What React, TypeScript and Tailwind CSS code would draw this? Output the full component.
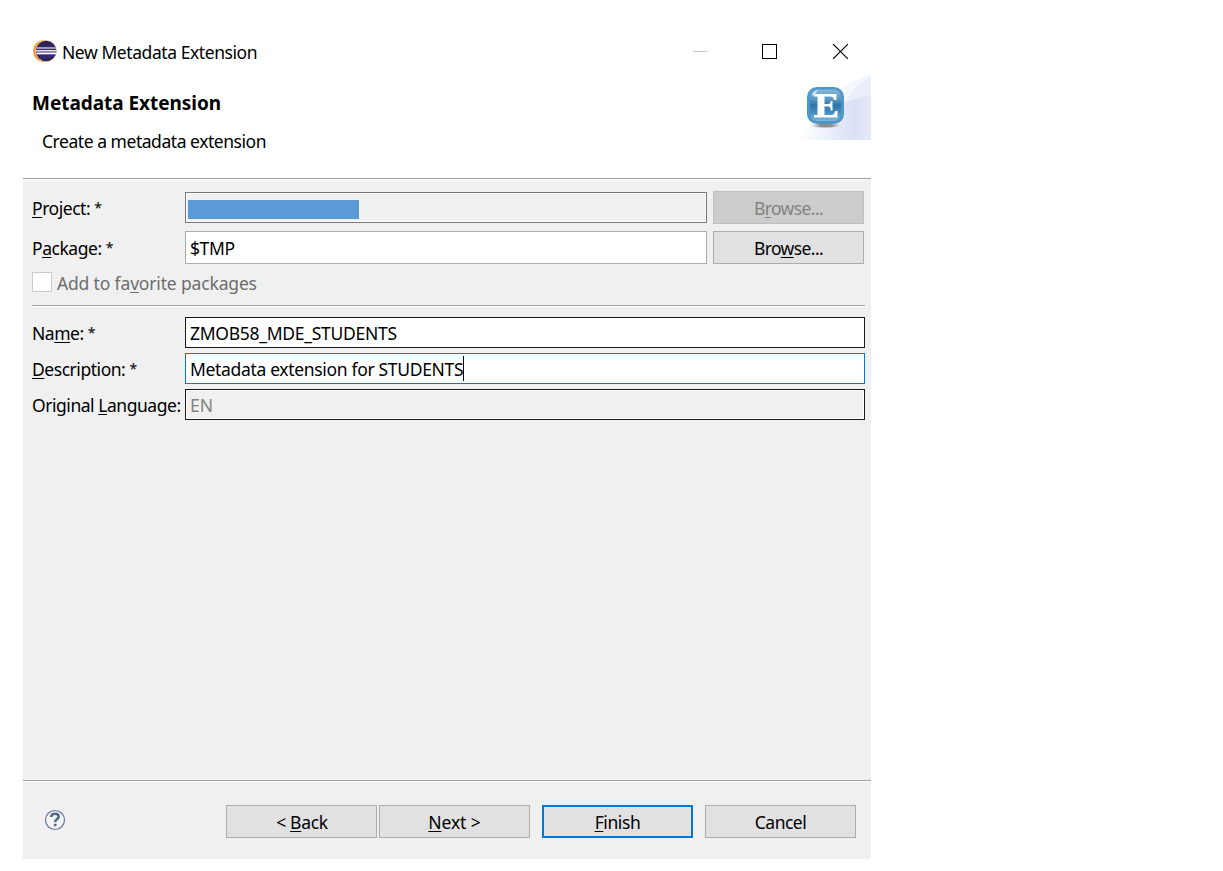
import type { ReactNode } from 'react'

// Underlined mnemonic letter
function Key({ children }: { children: ReactNode }) {
  return (
    <span className="underline decoration-1 underline-offset-[2px] [text-decoration-skip-ink:none]">
      {children}
    </span>
  )
}

// Required field marker
function Star() {
  return <span className="align-[2px] text-[14px] leading-none">*</span>
}

function Separator({ className = '' }: { className?: string }) {
  return <div className={`h-[2px] shrink-0 border-t border-[#a0a0a0] bg-white ${className}`} />
}

function Button({
  children,
  className = 'border border-[#adadad] bg-[#e1e1e1]',
}: {
  children: ReactNode
  className?: string
}) {
  return (
    <button className={`flex h-[33px] w-[151px] items-center justify-center ${className}`}>
      {children}
    </button>
  )
}

function EclipseLogo() {
  return (
    <svg width="25" height="24" viewBox="0 0 25 24">
      <defs>
        <linearGradient id="ball" x1="0" y1="0" x2="0" y2="1">
          <stop offset="0" stopColor="#2a2050" />
          <stop offset="0.6" stopColor="#3c2e72" />
          <stop offset="1" stopColor="#2a1f55" />
        </linearGradient>
      </defs>
      <circle cx="12" cy="11" r="10.8" fill="#f7941e" />
      <circle cx="14.1" cy="11" r="10.8" fill="#fbd9a8" />
      <circle cx="14.1" cy="11" r="10.3" fill="url(#ball)" />
      <rect x="4.4" y="7" width="19.6" height="2" fill="#9d96c0" />
      <rect x="4" y="10" width="20.4" height="1.500" fill="#e4e2ee" />
      <rect x="4.4" y="12.500" width="19.6" height="1.8" fill="#ffffff" />
    </svg>
  )
}

function HeaderArt() {
  return (
    <svg width="71" height="66" viewBox="0 0 71 66">
      <defs>
        <linearGradient id="swoosh" x1="0" y1="0" x2="1" y2="0">
          <stop offset="0" stopColor="#ffffff" />
          <stop offset="0.35" stopColor="#edf1fb" />
          <stop offset="0.75" stopColor="#d9e1f5" />
          <stop offset="1" stopColor="#e4e9f8" />
        </linearGradient>
        <linearGradient id="tile" x1="0" y1="0" x2="0" y2="1">
          <stop offset="0" stopColor="#86b4d7" />
          <stop offset="0.3" stopColor="#5c9ac8" />
          <stop offset="0.5" stopColor="#2e75aa" />
          <stop offset="0.75" stopColor="#4a90c2" />
          <stop offset="1" stopColor="#7db4da" />
        </linearGradient>
        <radialGradient id="shade">
          <stop offset="0.4" stopColor="#8d8d8d" />
          <stop offset="1" stopColor="#ffffff" stopOpacity="0" />
        </radialGradient>
      </defs>
      <path d="M32 21C44 12 56 5 71 0V40H30Z" fill="#f3f6fd" />
      <path d="M41 37C47 23 56 10 71 2V66H41Z" fill="#e9eefa" />
      <path d="M1 66C8 48 22 33 44 29C52 26 61 23 71 22V66Z" fill="url(#swoosh)" />
      <ellipse cx="26" cy="51.500" rx="18" ry="3.500" fill="url(#shade)" />
      <rect x="7" y="13" width="37" height="37" rx="10" fill="#4d96c9" />
      <rect x="10" y="15.5" width="31" height="31.5" rx="7" fill="url(#tile)" />
      <path d="M12 22c0-3 2-5 6-6l-3 4z" fill="#ffffff" opacity="0.7" />
      <path
        d="M14 20H36.500V26H34C33.500 23.500 32.500 22.500 30 22.500H24.500V30H28.500C30 30 30.500 29 30.800 27H32.500V36.500H30.800C30.500 34 30 32.500 28.500 32.500H24.500V41H31C34 41 34.500 40 35 37H37.500V43.500H14V41H17.500V22.500H14Z"
        fill="#ffffff"
      />
    </svg>
  )
}

function HelpIcon() {
  return (
    <svg width="22" height="22" viewBox="0 0 22 22" fill="none">
      <circle cx="11" cy="11" r="9.5" fill="#f4f4f4" stroke="#6a7c98" strokeWidth="1.2" />
      <path
        d="M7.200 8C7.200 5.700 8.800 4.800 11 4.800C13.300 4.800 14.700 5.800 14.700 7.700C14.700 10 11.200 10.200 11.200 13.200"
        stroke="#526a8f"
        strokeWidth="2.600"
      />
      <rect x="9.900" y="14.800" width="2.700" height="2.500" rx="0.700" fill="#526a8f" />
    </svg>
  )
}

const label = 'w-[153px] shrink-0 whitespace-nowrap tracking-[-0.46px]'
const field = 'flex items-center pl-1 whitespace-nowrap'

export default function App() {
  return (
    <div className="h-[871px] w-[1223px] overflow-hidden bg-white pl-[23px] pt-[30px] font-['Noto_Sans','Open_Sans',sans-serif] text-[17.5px] leading-6 text-black">
      <div className="flex h-[829px] w-[848px] flex-col bg-[#f0f0f0]">
        {/* Title bar and page heading */}
        <header className="flex h-[148px] shrink-0 justify-between bg-white">
          <div>
            <div className="flex h-[43px] items-center pl-[9px]">
              <EclipseLogo />
              <span className="pl-[5px] tracking-[-0.43px]">New Metadata Extension</span>
            </div>
            <h1 className="pl-[9px] pt-[18px] text-[19px] font-bold tracking-[-0.04px]">Metadata Extension</h1>
            <p className="pl-[19px] pt-[14px] tracking-[-0.46px]">Create a metadata extension</p>
          </div>
          <div className="flex flex-col items-end">
            <div className="flex h-[43px] items-center gap-[55px] pr-[23px]">
              <div className="flex items-center gap-[54px]">
                <div className="h-px w-[15px] bg-[#c9c9c9]" />
                <div className="h-[15px] w-[15px] border border-black" />
              </div>
              <svg width="16" height="15" viewBox="0 0 16 15" stroke="#000" strokeWidth="1.100">
                <path d="M1 0L16 15M16 0L1 15" />
              </svg>
            </div>
            <div className="pt-[1px]">
              <HeaderArt />
            </div>
          </div>
        </header>
        <Separator />

        <main className="flex flex-1 flex-col pl-[9px] pt-[11px]">
          <div className="flex h-[33px] items-center">
            <label className={label}><Key>P</Key>roject: <Star /></label>
            <div className="h-[31px] w-[522px] border border-[#7a7a7a] bg-[#f0f0f0] pl-[1px] pt-[7px] shadow-[inset_0_0_0_1px_#fff]">
              <div className="ml-[1px] h-[19px] w-[171px] bg-[#5b9bd5]" />
            </div>
            <div className="pl-[6px]">
              <Button className="border border-[#bfbfbf] bg-[#cccccc] text-[#838383]">
                <span className="tracking-[-0.6px]">B<Key>r</Key>owse...</span>
              </Button>
            </div>
          </div>

          <div className="mt-[7px] flex h-[33px] items-center">
            <label className={label}>P<Key>a</Key>ckage: <Star /></label>
            <div className={`${field} h-[33px] w-[522px] border border-[#abadb3] bg-white`}>
              <span className="tracking-[-0.4px]">$TMP</span>
            </div>
            <div className="pl-[6px]">
              <Button>
                <span className="tracking-[-0.6px]">Bro<Key>w</Key>se...</span>
              </Button>
            </div>
          </div>

          <div className="mt-2 flex h-5 items-center text-[#6d6d6d]">
            <div className="h-5 w-5 border border-[#cccccc] bg-white" />
            <span className="pl-[5px] pt-[1px] tracking-[-0.16px]">Add to fa<Key>v</Key>orite packages</span>
          </div>

          <Separator className="mt-[13px] w-[833px]" />

          <div className="mt-[10px] flex h-[31px] items-center">
            <label className={label}>Na<Key>m</Key>e: <Star /></label>
            <div className={`${field} h-[31px] w-[680px] border border-[#1a1a1a] bg-white`}>
              <span className="tracking-[-0.28px]">ZMOB58_MDE_STUDENTS</span>
            </div>
          </div>

          <div className="mt-[5px] flex h-[31px] items-center">
            <label className={label}><Key>D</Key>escription: <Star /></label>
            <div className={`${field} h-[31px] w-[680px] border border-[#0078d7] bg-white`}>
              <span className="tracking-[-0.33px]">Metadata extension for STUDENTS</span>
              <span className="h-[25px] w-px bg-black" />
            </div>
          </div>

          <div className="mt-[5px] flex h-[31px] items-center">
            <label className={label}>Original <Key>L</Key>anguage:</label>
            <div className={`${field} h-[31px] w-[680px] border border-[#1a1a1a] text-[#838383] shadow-[inset_0_0_0_1px_#fff]`}>
              EN
            </div>
          </div>
        </main>

        <Separator />
        <footer className="flex h-[77px] shrink-0 items-start pl-[21px] pt-[23px]">
          <div className="pt-[4px]">
            <HelpIcon />
          </div>
          <div className="flex pl-[160px]">
            <Button><span className="pl-px tracking-[-0.3px]">&lt; <Key>B</Key>ack</span></Button>
            <div className="pl-[2px]">
              <Button><span className="tracking-[-0.1px]"><Key>N</Key>ext &gt;</span></Button>
            </div>
            <div className="px-3">
              <Button className="border-2 border-[#0078d7] bg-[#e1e1e1]">
                <span className="tracking-[-0.4px]"><Key>F</Key>inish</span>
              </Button>
            </div>
            <Button><span className="tracking-[-0.5px]">Cancel</span></Button>
          </div>
        </footer>
      </div>
    </div>
  )
}
